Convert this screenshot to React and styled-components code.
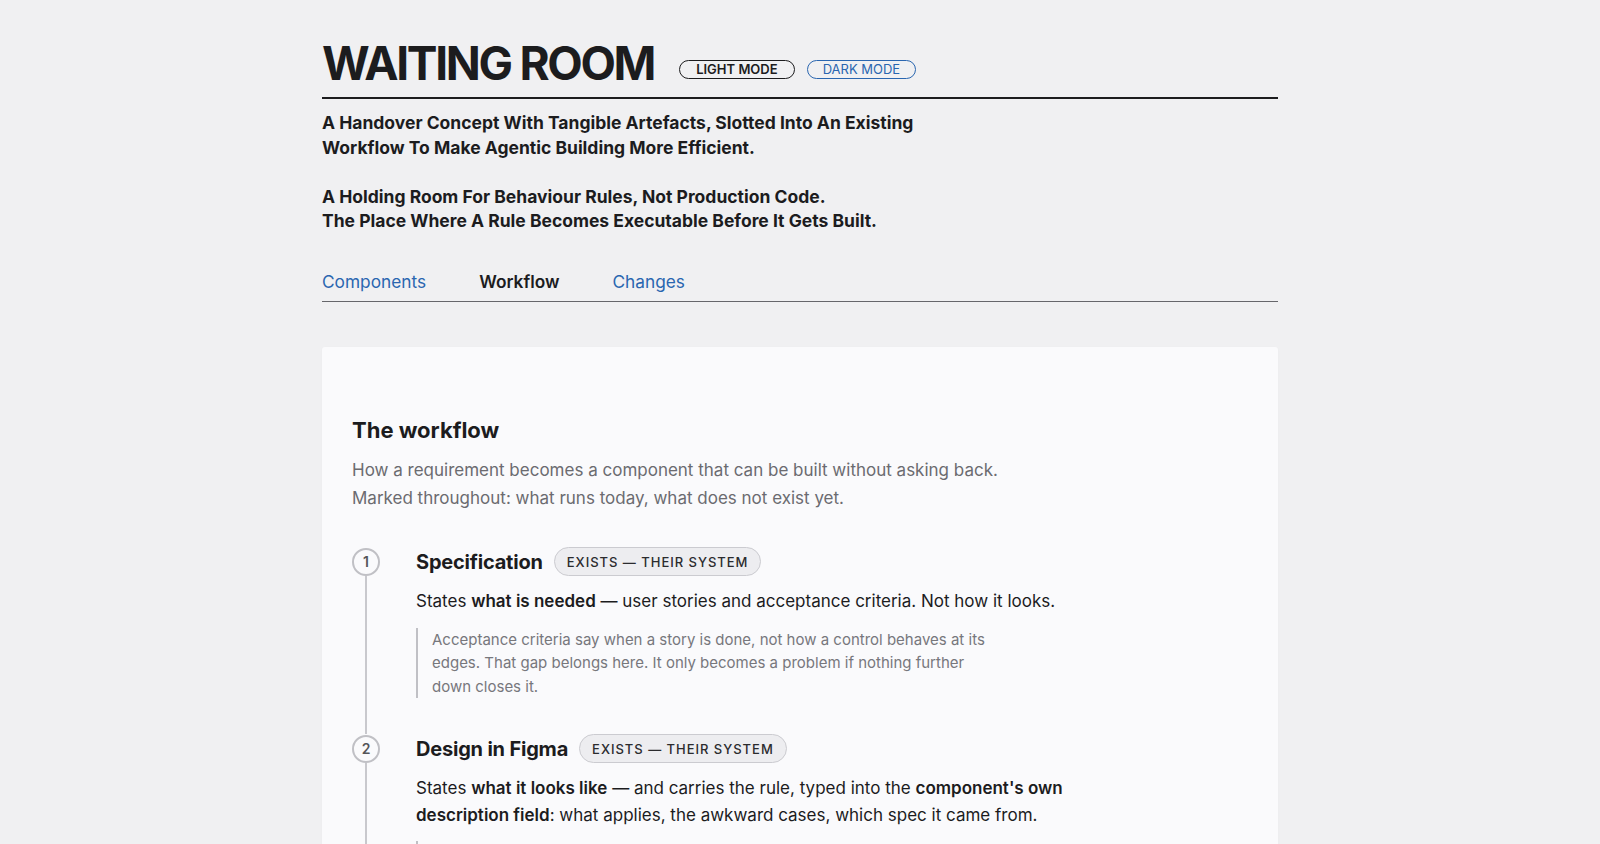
import React from "react";
import styled, { createGlobalStyle } from "styled-components";

const GlobalStyle = createGlobalStyle`
  body {
    margin: 0;
    background: #f0f0f2;
    font-family: Inter, "Noto Sans", "Liberation Sans", sans-serif;
    color: #1c1c1e;
  }
`;

const Page = styled.div`
  max-width: 956px;
  margin: 0 auto;
  padding-top: 35px;
`;

const Header = styled.header`
  display: flex;
  align-items: flex-end;
  gap: 25px;
  padding-bottom: 5px;
  border-bottom: 2px solid #1c1c1e;
`;

const Title = styled.h1`
  margin: 0;
  font-size: 46px;
  line-height: 57px;
  font-weight: 700;
  letter-spacing: -0.05em;
`;

const Modes = styled.div`
  display: flex;
  gap: 12px;
  margin-bottom: 13px;
`;

const ModeButton = styled.button`
  height: 19px;
  padding: 0 ${(p) => (p.$active ? "16px" : "15px")};
  border-radius: 10px;
  background: transparent;
  font-family: inherit;
  font-size: 13px;
  line-height: 1;
  text-transform: uppercase;
  border: 1.5px solid ${(p) => (p.$active ? "#1c1c1e" : "#2a66b0")};
  color: ${(p) => (p.$active ? "#1c1c1e" : "#2a66b0")};
  font-weight: ${(p) => (p.$active ? 600 : 400)};
  cursor: pointer;
`;

const Intro = styled.div`
  margin-top: 12px;
  font-size: 17.5px;
  line-height: 24.5px;
  font-weight: 700;
  color: #1c1c1e;

  p {
    margin: 0 0 24.5px;
  }
  p:last-child {
    margin-bottom: 0;
  }
`;

const Tabs = styled.nav`
  display: flex;
  gap: 53px;
  margin-top: 36px;
  padding-bottom: 7px;
  border-bottom: 1.5px solid #66666b;
`;

const Tab = styled.a`
  font-size: 17.3px;
  line-height: 24px;
  text-decoration: none;
  cursor: pointer;
  color: ${(p) => (p.$active ? "#1c1c1e" : "#2a66b0")};
  font-weight: ${(p) => (p.$active ? 600 : 400)};
`;

const Card = styled.section`
  margin-top: 45px;
  background: #fafafc;
  border-radius: 3px;
  box-shadow: 0 1px 3px rgba(0, 0, 0, 0.03);
  padding: 69px 30px 60px;
`;

const CardTitle = styled.h2`
  margin: 0;
  font-size: 22px;
  line-height: 28.6px;
  font-weight: 700;
`;

const CardLead = styled.p`
  margin: 12px 0 0;
  font-size: 17px;
  line-height: 28px;
  color: #6b6b70;
`;

const Steps = styled.ol`
  list-style: none;
  margin: 35px 0 0;
  padding: 0;
`;

const Step = styled.li`
  display: grid;
  grid-template-columns: 28px 1fr;
  column-gap: 36px;
`;

const Rail = styled.div`
  display: flex;
  flex-direction: column;
  align-items: center;
`;

const Num = styled.span`
  flex: none;
  width: 28px;
  height: 28px;
  box-sizing: border-box;
  border-radius: 50%;
  border: 2px solid #c0c0c5;
  display: flex;
  align-items: center;
  justify-content: center;
  font-size: 14px;
  font-weight: 600;
  color: #555559;
  margin-top: 0.5px;
`;

const Line = styled.span`
  flex: 1;
  width: 2px;
  background: #c8c8cd;
`;

const StepBody = styled.div`
  padding-bottom: 36px;
`;

const StepHead = styled.div`
  display: flex;
  align-items: center;
  gap: 11px;
  height: 29px;
`;

const StepTitle = styled.h3`
  margin: 0;
  font-size: 20px;
  line-height: 28px;
  font-weight: 700;
  letter-spacing: -0.01em;
`;

const Badge = styled.span`
  display: inline-flex;
  align-items: center;
  height: 29px;
  box-sizing: border-box;
  padding: 0 12px;
  border-radius: 15px;
  border: 1px solid #cbcbd0;
  background: #ededf0;
  font-size: 13px;
  font-weight: 500;
  letter-spacing: 0.075em;
  text-transform: uppercase;
  color: #2b2b2e;
`;

const StepText = styled.p`
  margin: 12px 0 0;
  max-width: 665px;
  font-size: 17px;
  line-height: 26.5px;
  color: #1c1c1e;

  b {
    font-weight: 600;
  }
`;

const Note = styled.blockquote`
  margin: 13px 0 0;
  padding-left: 14px;
  border-left: 2px solid #c0c0c5;
  max-width: 575px;
  font-size: 15px;
  line-height: 23.5px;
  color: #77777c;
`;

const steps = [
  {
    title: "Specification",
    badge: "Exists — their system",
    text: (
      <>
        States <b>what is needed</b> — user stories and acceptance criteria. Not how it looks.
      </>
    ),
    note:
      "Acceptance criteria say when a story is done, not how a control behaves at its edges. That gap belongs here. It only becomes a problem if nothing further down closes it.",
  },
  {
    title: "Design in Figma",
    badge: "Exists — their system",
    text: (
      <>
        States <b>what it looks like</b> — and carries the rule, typed into the{" "}
        <b>component's own description field</b>: what applies, the awkward cases, which spec it came from.
      </>
    ),
    note:
      "The description field travels with the component. Whoever opens it later reads the rule next to the shape it governs.",
  },
  {
    title: "Waiting room",
    badge: "Does not exist yet",
    text: (
      <>
        Holds <b>the rule as something that runs</b> — before anyone builds the real thing.
      </>
    ),
    note: "Every rule gets a small, executable artefact that can be poked at and handed over.",
  },
];

export default function App() {
  return (
    <>
      <GlobalStyle />
      <Page>
        <Header>
          <Title>WAITING ROOM</Title>
          <Modes>
            <ModeButton $active>Light mode</ModeButton>
            <ModeButton>Dark mode</ModeButton>
          </Modes>
        </Header>
        <Intro>
          <p>
            A Handover Concept With Tangible Artefacts, Slotted Into An Existing
            <br />
            Workflow To Make Agentic Building More Efficient.
          </p>
          <p>
            A Holding Room For Behaviour Rules, Not Production Code.
            <br />
            The Place Where A Rule Becomes Executable Before It Gets Built.
          </p>
        </Intro>
        <Tabs>
          <Tab>Components</Tab>
          <Tab $active>Workflow</Tab>
          <Tab>Changes</Tab>
        </Tabs>
        <Card>
          <CardTitle>The workflow</CardTitle>
          <CardLead>
            How a requirement becomes a component that can be built without asking back.
            <br />
            Marked throughout: what runs today, what does not exist yet.
          </CardLead>
          <Steps>
            {steps.map((s, i) => (
              <Step key={s.title}>
                <Rail>
                  <Num>{i + 1}</Num>
                  <Line />
                </Rail>
                <StepBody>
                  <StepHead>
                    <StepTitle>{s.title}</StepTitle>
                    <Badge>{s.badge}</Badge>
                  </StepHead>
                  <StepText>{s.text}</StepText>
                  <Note>{s.note}</Note>
                </StepBody>
              </Step>
            ))}
          </Steps>
        </Card>
      </Page>
    </>
  );
}
